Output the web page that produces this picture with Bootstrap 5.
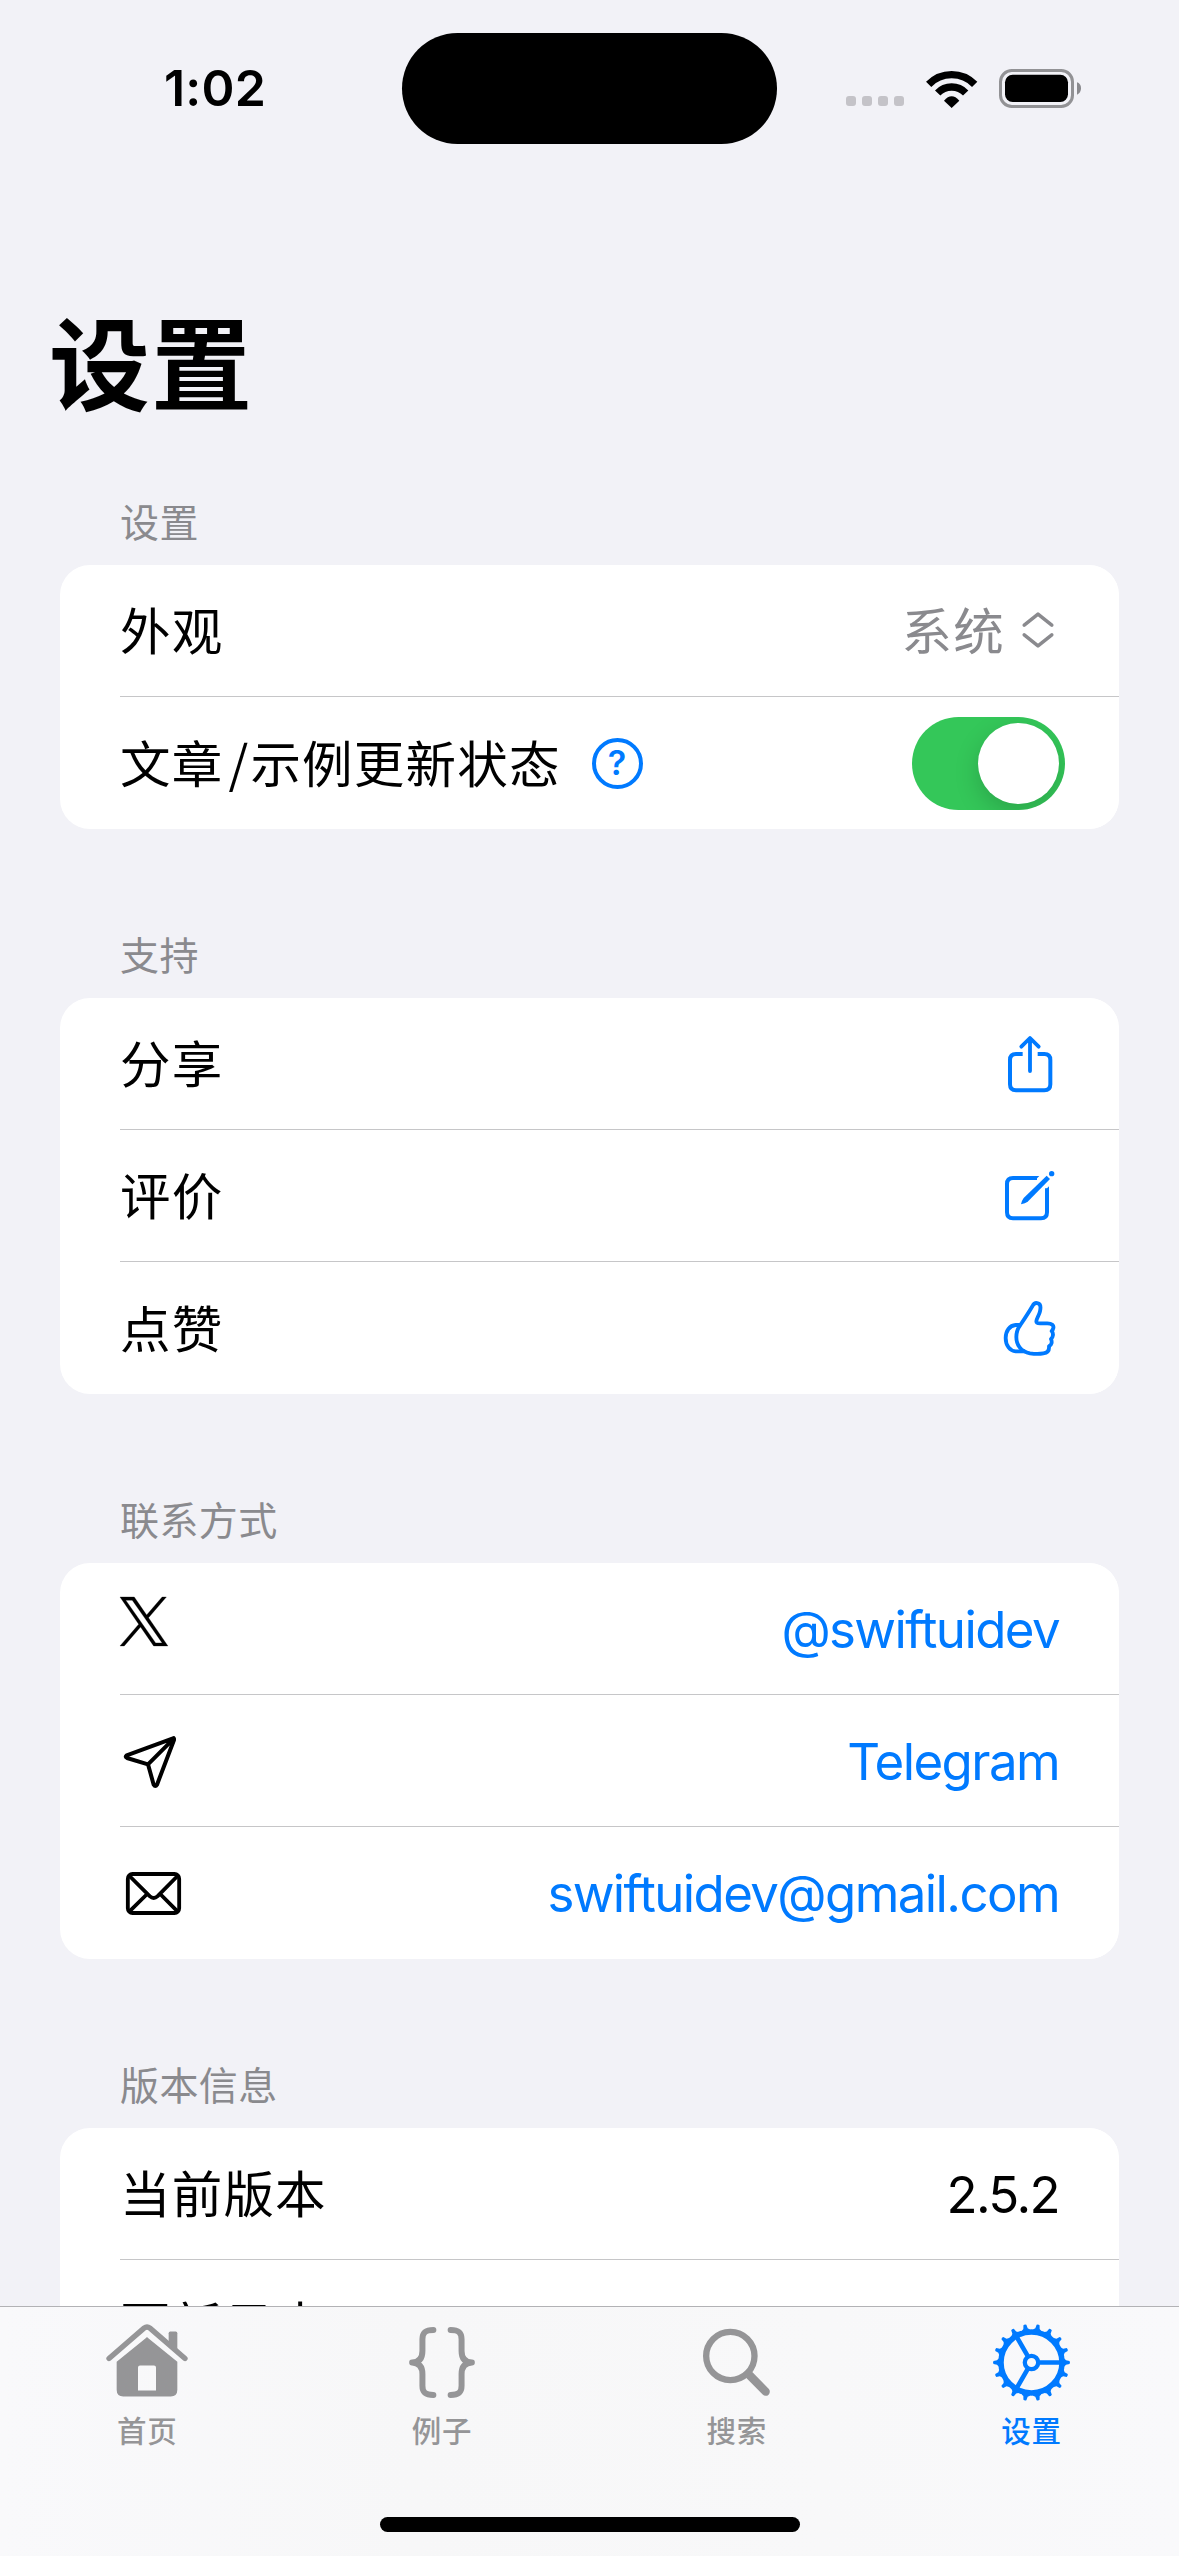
<!DOCTYPE html>
<html lang="zh-CN">
<head>
<meta charset="utf-8">
<meta name="viewport" content="width=device-width, initial-scale=1">
<title>设置</title>
<link href="https://cdn.jsdelivr.net/npm/bootstrap@5.3.0/dist/css/bootstrap.min.css" rel="stylesheet">
<style>
  html, body { height: 2556px; overflow: hidden; }
  body { background: #f2f2f7; color: #000; font-family: Inter, "Noto Sans CJK SC", sans-serif; font-size: 51px; line-height: 1; }
  svg { display: block; flex: none; overflow: visible; }
  .tint { color: #007aff; }
  .muted { color: #8a8a8e; }
  .zh { font-family: "Noto Sans CJK SC", sans-serif; letter-spacing: .9px; }

  .status { height: 178px; padding: 33px 97px 0 164px; }
  .clock { width: 238px; font-size: 50px; font-weight: 600; letter-spacing: .2px; line-height: 111px; }
  .island { width: 376px; height: 111px; border-radius: 56px; background: #000; }
  .signals { height: 111px; }
  .cell-dots { gap: 6px; margin: 25px 22px 0 69px; }
  .cell-dots span { width: 10px; height: 10px; border-radius: 3px; background: #c4c3c8; }
  .wifi { margin-right: 22px; }

  .page-title { margin: 0; padding: 130px 0 0 49px; height: 320px; font-size: 101px; font-weight: 700; line-height: 102px; }
  .sect { padding: 0 60px; }
  .sect-head { height: 67px; padding-left: 60px; font-size: 39px; line-height: 45px; letter-spacing: .4px; }
  .sect + .sect { padding-top: 102px; }
  .panel { --bs-list-group-bg: #fff; border-radius: 30px; background: #fff; overflow: hidden; }
  .panel .list-group-item { height: 132px; margin-left: 60px; padding: 0 60px 0 0; border: 0; border-bottom: 1px solid #c6c6c8; color: #000; }
  .panel .list-group-item:last-child { border-bottom: 0; }
  .panel .zh { padding-bottom: 4px; font-size: 50.5px; letter-spacing: 1.2px; }
  .panel .under-tabs { padding-bottom: 7px; }
  .slash { margin: 0 1px 0 5px; }
  .help { width: 51px; height: 51px; margin-left: 31px; border: 4.5px solid #007aff; border-radius: 50%; font-size: 34px; font-weight: 600; line-height: 42px; }
  .toggle { width: 153px; height: 93px; margin-right: -6px; padding: 6px; border-radius: 47px; background: #34c759; overflow: hidden; }
  .knob { width: 81px; height: 81px; border-radius: 50%; background: #fff; box-shadow: 0 9px 24px rgba(0,0,0,.17); }
  .chevrons { margin: -1px 5px 0 17px; }
  .contact { padding-top: 1px; letter-spacing: -1.6px; font-variant-ligatures: none; font-feature-settings: "calt" 0; }

  .tabs { height: 250px; border-top: 1px solid #b2b2b5; background: linear-gradient(90deg, #f9f9fb, #f7f7f8 35%, #f8f8f9 70%, #f9f9fb); }
  .tab-row { height: 210px; }
  .tab { color: #959597; font-size: 29.5px; font-weight: 500; }
  .tab.active { color: #007aff; }
  .tab-icon { height: 108px; padding-top: 3px; }
  .home-bar { width: 420px; height: 15px; border-radius: 8px; background: #000; margin: 0 auto; }
</style>
<script src="https://cdn.jsdelivr.net/npm/bootstrap@5.3.0/dist/js/bootstrap.bundle.min.js"></script>
</head>
<body>

<header class="status d-flex align-items-start">
  <div class="clock">1:02</div>
  <div class="island"></div>
  <div class="signals d-flex align-items-center">
    <div class="cell-dots d-flex"><span></span><span></span><span></span><span></span></div>
    <svg class="wifi" width="51" height="38" viewBox="318 84 153 114" fill="none" stroke="#000" stroke-width="22">
      <path d="M326 127A96 96 0 0 1 464 127"/><path d="M353 153A58 58 0 0 1 437 153"/>
      <path d="M395 198L372 176Q395 150 418 176Z" fill="#000" stroke="none"/>
    </svg>
    <svg width="83" height="39" viewBox="537 84 249 117">
      <rect x="541.5" y="88.500" width="216" height="108" rx="34" fill="none" stroke="#929295" stroke-width="9"/>
      <rect x="555" y="101" width="189" height="82" rx="23"/>
      <path d="M771 124Q783 128 783 142T771 161Z" fill="#8a8a8e"/>
    </svg>
  </div>
</header>

<main>
  <h1 class="page-title zh">设置</h1>

  <section class="sect">
    <div class="sect-head zh muted">设置</div>
    <div class="panel list-group list-group-flush">
      <div class="list-group-item d-flex align-items-center justify-content-between">
        <span class="zh">外观</span>
        <span class="d-flex align-items-center muted"><span class="zh">系统</span>
          <svg class="chevrons" width="32" height="36" viewBox="487 155 94 107" fill="none" stroke="currentColor" stroke-width="10.500" stroke-linecap="round" stroke-linejoin="round"><path d="M493 194L534 161L575 194M493 223L534 256L575 223"/></svg>
        </span>
      </div>
      <div class="list-group-item d-flex align-items-center justify-content-between">
        <span class="d-flex align-items-center"><span class="zh">文章<span class="slash">/</span>示例更新状态</span><span class="help tint text-center">?</span></span>
        <span class="toggle d-flex justify-content-end" role="switch" aria-checked="true"><span class="knob"></span></span>
      </div>
    </div>
  </section>

  <section class="sect">
    <div class="sect-head zh muted">支持</div>
    <div class="panel list-group list-group-flush">
      <div class="list-group-item d-flex align-items-center justify-content-between">
        <span class="zh">分享</span>
        <svg class="tint" style="margin-right:7px" width="44" height="56" viewBox="144 110 132 168" fill="none" stroke="currentColor" stroke-width="12"><path d="M188 164H168Q150 164 150 182V255Q150 273 168 273H253Q271 273 271 255V182Q271 164 253 164H233"/><path d="M210 117V215M184 142L210 116L236 142" stroke-width="11.500" stroke-linecap="round" stroke-linejoin="round"/></svg>
      </div>
      <div class="list-group-item d-flex align-items-center justify-content-between">
        <span class="zh">评价</span>
        <svg class="tint" style="margin-right:4px" width="50" height="49" viewBox="135 515 150 147" fill="currentColor"><path d="M231 536H159Q141 536 141 554V639Q141 657 159 657H243Q261 657 261 639V567" fill="none" stroke="currentColor" stroke-width="12"/><path d="M226 530H238L226 542ZM255 573L267 561V573Z"/><path d="M260 529L270 539L203 607Q196 612 183 615Q186 602 191 596Z"/><circle cx="275" cy="523" r="8"/></svg>
      </div>
      <div class="list-group-item d-flex align-items-center justify-content-between">
        <span class="zh">点赞</span>
        <svg class="tint" style="margin-right:4px" width="51" height="55" viewBox="132 905 153 163" fill="none" stroke="currentColor" stroke-width="11.500" stroke-linejoin="round"><path d="M181 976C195 955 208 935 218 918C223 909 229 909 234 911C244 914 242 926 240 935C237 948 230 955 229 965C229 970 233 971 240 971H262C276 971 282 977 280 985C279 990 277 992 275 994C281 1001 280 1012 273 1018C277 1027 275 1036 267 1040C268 1051 265 1059 250 1061C240 1063 225 1063 210 1061C182 1056 169 1035 169 1012C169 995 174 985 181 976Z"/><path d="M181 976H167C149 977 137 994 137 1015C137 1038 150 1054 167 1055H195"/></svg>
      </div>
    </div>
  </section>

  <section class="sect">
    <div class="sect-head zh muted">联系方式</div>
    <div class="panel list-group list-group-flush">
      <div class="list-group-item d-flex align-items-center justify-content-between">
        <svg style="margin-bottom:15px" width="48" height="49" viewBox="0 0 24 24" preserveAspectRatio="none"><path stroke="#000" stroke-width=".15" d="M14.258 10.152 23.176 0h-2.113l-7.747 8.813L7.133 0H0l9.352 13.328L0 23.973h2.113l8.176-9.309 6.531 9.309h7.133zm-2.895 3.293-.949-1.328L2.875 1.56h3.246l6.086 8.523.945 1.328 7.91 11.078h-3.246z"/></svg>
        <span class="contact tint">@swiftuidev</span>
      </div>
      <div class="list-group-item d-flex align-items-center justify-content-between">
        <svg style="margin:2px 0 0 4px" width="52" height="52" viewBox="192 710 156 156" fill="none" stroke="#000" stroke-width="12" stroke-linejoin="round"><path d="M339 717L200 768Q194 773 201 776L264 795L281 856Q286 864 291 856L342 722Q343 715 339 717ZM264 795L339 720"/></svg>
        <span class="contact tint">Telegram</span>
      </div>
      <div class="list-group-item d-flex align-items-center justify-content-between">
        <svg style="margin-left:6px" width="55" height="43" viewBox="198 1117 165 128" fill="none" stroke="#000" stroke-width="11.500"><rect x="203.5" y="1122.5" width="154" height="117" rx="14"/><path d="M207 1127L269 1189Q281 1200 293 1189L354 1127M207 1236L260 1184M354 1236L302 1184"/></svg>
        <span class="contact tint">swiftuidev@gmail.com</span>
      </div>
    </div>
  </section>

  <section class="sect">
    <div class="sect-head zh muted">版本信息</div>
    <div class="panel list-group list-group-flush">
      <div class="list-group-item d-flex align-items-center justify-content-between">
        <span class="zh">当前版本</span>
        <span class="contact">2.5.2</span>
      </div>
      <div class="list-group-item d-flex align-items-center justify-content-between">
        <span class="zh under-tabs">更新日志</span>
      </div>
    </div>
  </section>
</main>

<nav class="tabs fixed-bottom">
  <div class="tab-row row g-0">
    <div class="tab col d-flex flex-column align-items-center">
      <div class="tab-icon d-flex align-items-center"><svg class="mb-1" width="82" height="73" viewBox="47 71 246 218" fill="currentColor"><path d="M56 174L161 83Q170 76 179 83L284 174" fill="none" stroke="currentColor" stroke-width="16" stroke-linecap="round"/><path d="M235 135V98Q235 93 240 93H256Q261 93 261 98V155Z"/><path fill-rule="evenodd" d="M166 113Q170 108 174 113L261 184V268Q261 288 241 288H99Q79 288 79 268V184ZM149 195Q143 195 143 201V270H197V201Q197 195 191 195Z"/></svg></div>
      <span class="zh">首页</span>
    </div>
    <div class="tab col d-flex flex-column align-items-center">
      <div class="tab-icon d-flex align-items-center"><svg width="66" height="71" viewBox="957 83 198 214" fill="none" stroke="currentColor" stroke-width="18" stroke-linecap="round" stroke-linejoin="round"><path d="M1030 92C1005 92 997 100 997 120V155C997 178 985 189 966 190C985 191 997 202 997 225V260C997 280 1005 288 1030 288"/><path d="M1082 92C1107 92 1115 100 1115 120V155C1115 178 1127 189 1146 190C1127 191 1115 202 1115 225V260C1115 280 1107 288 1082 288"/></svg></div>
      <span class="zh">例子</span>
    </div>
    <div class="tab col d-flex flex-column align-items-center">
      <div class="tab-icon d-flex align-items-center"><svg width="67" height="67" viewBox="42 90 201 201" fill="none" stroke="currentColor"><circle cx="124" cy="171" r="72.500" stroke-width="19"/><path d="M178 225L230 278" stroke-width="25" stroke-linecap="round"/></svg></div>
      <span class="zh">搜索</span>
    </div>
    <div class="tab active col d-flex flex-column align-items-center">
      <div class="tab-icon d-flex align-items-center"><svg width="77" height="77" viewBox="-38.500 -38.500 77 77" fill="none" stroke="currentColor">
        <defs><path id="tooth" d="M31 -5Q33.500 -4 34.500 -2.200L38 -1.500Q39 0 38 1.500L34.500 2.200Q33.500 4 31 5Z" fill="currentColor" stroke="none"/>
        <g id="teeth3"><use href="#tooth"/><use href="#tooth" transform="rotate(20)"/><use href="#tooth" transform="rotate(40)"/></g></defs>
        <use href="#teeth3"/><use href="#teeth3" transform="rotate(60)"/><use href="#teeth3" transform="rotate(120)"/><use href="#teeth3" transform="rotate(180)"/><use href="#teeth3" transform="rotate(240)"/><use href="#teeth3" transform="rotate(300)"/>
        <circle r="30.500" stroke-width="5.500"/><circle r="6.700" stroke-width="4.300"/>
        <path d="M8 0H29M-4 6.930L-14.500 25.100M-4 -6.930L-14.500 -25.100" stroke-width="4.600"/></svg></div>
      <span class="zh">设置</span>
    </div>
  </div>
  <div class="home-bar"></div>
</nav>
</body>
</html>
